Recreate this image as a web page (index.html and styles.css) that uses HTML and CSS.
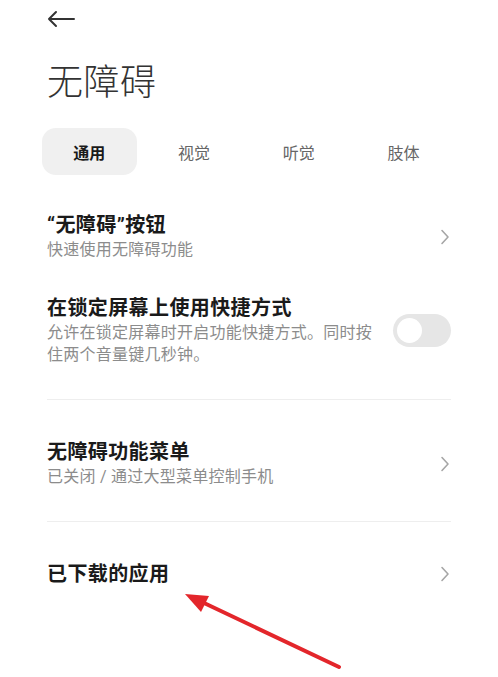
FILE: index.html
```html
<!DOCTYPE html>
<html>
<head>
  <title>无障碍</title>
  <link rel="stylesheet" href="styles.css">
</head>
<body>
  <div class="page">
    <div class="top">
      <svg class="back" width="30" height="18" viewBox="0 0 30 18">
        <path d="M28 9 H3 M10 2 L3 9 L10 16" fill="none" stroke="#333" stroke-width="2" stroke-linecap="round" stroke-linejoin="round"/>
      </svg>
    </div>

    <h1>无障碍</h1>

    <div class="tabs">
      <div class="tab active">通用</div>
      <div class="tab">视觉</div>
      <div class="tab">听觉</div>
      <div class="tab">肢体</div>
    </div>

    <div class="list">
      <div class="item">
        <div class="text">
          <div class="title">“无障碍”按钮</div>
          <div class="sub">快速使用无障碍功能</div>
        </div>
        <svg class="chev" width="10" height="16" viewBox="0 0 10 16">
          <path d="M2 1.5 L8 8 L2 14.5" fill="none" stroke="#a6a6a6" stroke-width="1.6" stroke-linecap="round" stroke-linejoin="round"/>
        </svg>
      </div>

      <div class="item">
        <div class="text narrow">
          <div class="title">在锁定屏幕上使用快捷方式</div>
          <div class="sub">允许在锁定屏幕时开启功能快捷方式。同时按住两个音量键几秒钟。</div>
        </div>
        <div class="toggle"><div class="knob"></div></div>
      </div>

      <div class="divider"></div>

      <div class="item">
        <div class="text">
          <div class="title">无障碍功能菜单</div>
          <div class="sub">已关闭 / 通过大型菜单控制手机</div>
        </div>
        <svg class="chev" width="10" height="16" viewBox="0 0 10 16">
          <path d="M2 1.5 L8 8 L2 14.5" fill="none" stroke="#a6a6a6" stroke-width="1.6" stroke-linecap="round" stroke-linejoin="round"/>
        </svg>
      </div>

      <div class="divider"></div>

      <div class="item">
        <div class="text">
          <div class="title">已下载的应用</div>
        </div>
        <svg class="chev" width="10" height="16" viewBox="0 0 10 16">
          <path d="M2 1.5 L8 8 L2 14.5" fill="none" stroke="#a6a6a6" stroke-width="1.6" stroke-linecap="round" stroke-linejoin="round"/>
        </svg>
      </div>
    </div>
  </div>

  <!-- annotation arrow -->
  <svg class="pointer" width="498" height="677" viewBox="0 0 498 677">
    <line x1="339" y1="667" x2="203" y2="602.5" stroke="#e3262b" stroke-width="4" stroke-linecap="round"/>
    <polygon points="185,594 209,596 201,612" fill="#e3262b"/>
  </svg>
</body>
</html>
```

FILE: styles.css
```css
body {
  margin: 0;
  background-color: #ffffff;
  font-family: Roboto, 'Noto Sans CJK SC', sans-serif;
  color: #1a1a1a;
}

.page {
  padding: 0 47px;
}

.top {
  height: 37px;
  display: flex;
  align-items: center;
}

.back {
  margin-left: -1px;
}

h1 {
  margin: 21px 0 20px;
  font-size: 36px;
  line-height: 50px;
  font-weight: 300;
  color: #333333;
  letter-spacing: 0.5px;
}

.tabs {
  display: flex;
  gap: 10px;
  margin-left: -5px;
}

.tab {
  width: 96px;
  height: 47px;
  display: flex;
  align-items: center;
  justify-content: center;
  font-size: 16px;
  color: #666666;
  border-radius: 14px;
}

.tab.active {
  background-color: #f0f0f0;
  color: #1a1a1a;
  font-weight: 700;
}

.list {
  margin-top: 20px;
}

.item {
  display: flex;
  align-items: center;
  justify-content: space-between;
  padding: 17px 0;
}

.text {
  flex: 1;
}

.text.narrow {
  max-width: 332px;
}

.title {
  font-size: 20px;
  line-height: 26px;
  font-weight: 700;
  color: #1a1a1a;
  letter-spacing: 0.4px;
}

.sub {
  font-size: 16px;
  line-height: 22px;
  color: #8c8c8c;
  margin-top: 1px;
  letter-spacing: 0.25px;
}

.chev {
  margin-right: 1px;
}

.toggle {
  width: 58px;
  height: 33px;
  border-radius: 17px;
  background-color: #e6e6e6;
  display: flex;
  align-items: center;
  padding-left: 4px;
  box-sizing: border-box;
}

.knob {
  width: 25px;
  height: 25px;
  border-radius: 50%;
  background-color: #ffffff;
}

.divider {
  height: 1px;
  background-color: #eeeeee;
  margin: 16px 0 22px;
}

.pointer {
  position: absolute;
  top: 0;
  left: 0;
  pointer-events: none;
}
```
